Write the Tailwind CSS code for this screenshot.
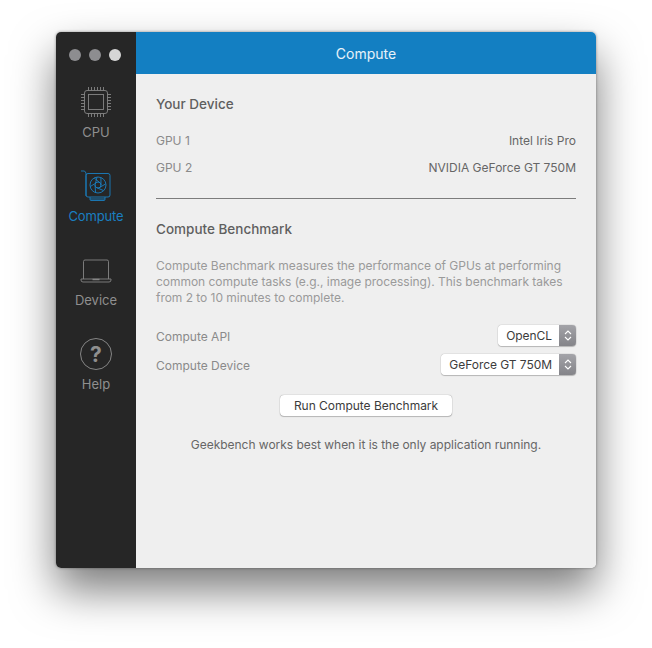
<!DOCTYPE html>
<html lang="en">
<head>
    <meta charset="UTF-8">
    <title>Geekbench - Compute</title>
    <script src="https://cdn.jsdelivr.net/npm/@tailwindcss/browser@4"></script>
</head>
<body class="bg-white font-['Inter',sans-serif] overflow-hidden">
    <div class="w-[652px] h-[648px] pt-[32px] pl-[56px]">
        <!-- window -->
        <div class="flex w-[540px] h-[536px] rounded-[5px] overflow-hidden shadow-[0_22px_44px_rgba(0,0,0,0.52),0_0_3px_rgba(0,0,0,0.4)]">
            <!-- sidebar -->
            <aside class="w-[80px] shrink-0 bg-[#262626] flex flex-col items-center">
                <div class="flex gap-[8px] mt-[17px] mr-[2px] h-[12px]">
                    <span class="w-[12px] h-[12px] rounded-full bg-[#8d8d90]"></span>
                    <span class="w-[12px] h-[12px] rounded-full bg-[#8d8d90]"></span>
                    <span class="w-[12px] h-[12px] rounded-full bg-[#d6d6d6]"></span>
                </div>
                <!-- CPU -->
                <div class="flex flex-col items-center mt-[25px] h-[84px] w-full">
                    <svg class="w-[32px] h-[32px]" viewBox="0 0 32 32" fill="none" stroke="#858585" stroke-width="0.9">
                        <rect x="4.5" y="4.5" width="23" height="23" rx="2.5"/>
                        <rect x="8.5" y="8.5" width="15" height="15"/>
                        <path d="M8.5 1v3.5M11.5 1v3.5M14.5 1v3.5M17.5 1v3.5M20.5 1v3.5M23.5 1v3.5M8.5 27.5V31M11.5 27.5V31M14.5 27.5V31M17.5 27.5V31M20.5 27.5V31M23.5 27.5V31M1 8.5h3.5M1 11.5h3.5M1 14.5h3.5M1 17.5h3.5M1 20.5h3.5M1 23.5h3.5M27.5 8.5H31M27.5 11.5H31M27.5 14.5H31M27.5 17.5H31M27.5 20.5H31M27.5 23.5H31"/>
                    </svg>
                    <span class="mt-[6px] text-[13px] leading-[16px] text-[#8f8f8f]">CPU</span>
                </div>
                <!-- Compute -->
                <div class="flex flex-col items-center h-[84px] w-full">
                    <svg class="w-[32px] h-[32px]" viewBox="0 0 32 32" fill="none" stroke="#1a7fc1" stroke-width="0.9">
                        <path d="M1 1h3.5l1.5 2v23"/>
                        <rect x="6" y="3.5" width="24" height="23.5" rx="2"/>
                        <path d="M10 27v2.5a1 1 0 0 0 1 1h13a1 1 0 0 0 1-1V27M10 29h15"/>
                        <circle cx="18" cy="15" r="8"/>
                        <circle cx="18" cy="15" r="3"/>
                        <path d="M15.5 13.3L17 7.1M20.1 12.9L14.2 8M21 15.3L20.9 7.6M19.2 17.7L25.5 14M16.4 17.5L23.4 20.5M15 14.8L15.6 22.6M15.5 13.3L10.3 16.5"/>
                    </svg>
                    <span class="mt-[6px] text-[13px] tracking-[-0.15px] leading-[16px] text-[#1a7fc1]">Compute</span>
                </div>
                <!-- Device -->
                <div class="flex flex-col items-center h-[84px] w-full">
                    <svg class="w-[32px] h-[32px]" viewBox="0 0 32 32" fill="none" stroke="#858585" stroke-width="0.9">
                        <path d="M3.5 25V7.5a1.5 1.5 0 0 1 1.5-1.5h22a1.5 1.5 0 0 1 1.5 1.5V25"/>
                        <path d="M1 25h30v1a2 2 0 0 1-2 2H3a2 2 0 0 1-2-2z"/>
                        <path d="M12.5 25.5h7" stroke-width="1.5"/>
                    </svg>
                    <span class="mt-[6px] text-[13px] leading-[16px] text-[#8f8f8f]">Device</span>
                </div>
                <!-- Help -->
                <div class="flex flex-col items-center h-[84px] w-full">
                    <div class="w-[32px] h-[32px] rounded-full border border-[#858585] flex items-center justify-center text-[21px] font-bold leading-none text-[#8f8f8f]">?</div>
                    <span class="mt-[6px] text-[13px] leading-[16px] text-[#8f8f8f]">Help</span>
                </div>
            </aside>
            <!-- main -->
            <div class="flex-1 bg-[#efefef] flex flex-col">
                <header class="h-[42px] bg-[#137fc2] flex items-center justify-center text-[14px] text-white/90">Compute</header>
                <main class="px-[20px] pt-[21px]">
                    <h2 class="text-[13.5px] leading-[18px] font-medium text-[#5f5f5f]">Your Device</h2>
                    <div class="mt-[20px] flex justify-between text-[12px] leading-[16px]">
                        <span class="text-[#8a8a8a]">GPU 1</span>
                        <span class="text-[#666666]">Intel Iris Pro</span>
                    </div>
                    <div class="mt-[11px] flex justify-between text-[12px] leading-[16px]">
                        <span class="text-[#8a8a8a]">GPU 2</span>
                        <span class="text-[#666666]">NVIDIA GeForce GT 750M</span>
                    </div>
                    <div class="mt-[22px] h-px bg-[#7c7c7c]"></div>
                    <h2 class="mt-[21px] text-[13.5px] leading-[18px] font-medium text-[#5f5f5f]">Compute Benchmark</h2>
                    <p class="mt-[20px] text-[12px] tracking-[-0.03px] leading-[16px] text-[#9a9a9a]">Compute Benchmark measures the performance of GPUs at performing common compute tasks (e.g., image processing). This benchmark takes from 2 to 10 minutes to complete.</p>
                    <div class="mt-[19px] h-[21px] flex justify-between items-center text-[12px]">
                        <span class="mt-[3px] text-[#8a8a8a]">Compute API</span>
                        <div class="flex h-[21px] rounded-[4px] overflow-hidden shadow-[0_0_1px_rgba(0,0,0,0.5),0_1px_1px_rgba(0,0,0,0.2)]">
                            <span class="bg-white pl-[8px] pr-[7px] leading-[21px] tracking-[-0.05px] text-[#3c3c3c]">OpenCL</span>
                            <span class="w-[17px] bg-gradient-to-b from-[#a3a3a8] to-[#848489] flex items-center justify-center">
                                <svg class="w-[8px] h-[13px]" viewBox="0 0 8 13" fill="none" stroke="#fff" stroke-width="1.1"><path d="M1 5l3-3 3 3M1 8l3 3 3-3"/></svg>
                            </span>
                        </div>
                    </div>
                    <div class="mt-[8px] h-[21px] flex justify-between items-center text-[12px]">
                        <span class="mt-[3px] text-[#8a8a8a]">Compute Device</span>
                        <div class="flex h-[21px] rounded-[4px] overflow-hidden shadow-[0_0_1px_rgba(0,0,0,0.5),0_1px_1px_rgba(0,0,0,0.2)]">
                            <span class="bg-white pl-[8px] pr-[7px] leading-[21px] tracking-[-0.05px] text-[#3c3c3c]">GeForce GT 750M</span>
                            <span class="w-[17px] bg-gradient-to-b from-[#a3a3a8] to-[#848489] flex items-center justify-center">
                                <svg class="w-[8px] h-[13px]" viewBox="0 0 8 13" fill="none" stroke="#fff" stroke-width="1.1"><path d="M1 5l3-3 3 3M1 8l3 3 3-3"/></svg>
                            </span>
                        </div>
                    </div>
                    <div class="mt-[20px] flex justify-center">
                        <button class="w-[172px] h-[21px] bg-white rounded-[4px] text-[12px] leading-[20px] tracking-[-0.03px] text-[#3c3c3c] shadow-[0_0_1px_rgba(0,0,0,0.5),0_1px_1px_rgba(0,0,0,0.2)]">Run Compute Benchmark</button>
                    </div>
                    <p class="mt-[21px] text-center text-[12px] tracking-[-0.03px] leading-[16px] text-[#666666]">Geekbench works best when it is the only application running.</p>
                </main>
            </div>
        </div>
    </div>
</body>
</html>
